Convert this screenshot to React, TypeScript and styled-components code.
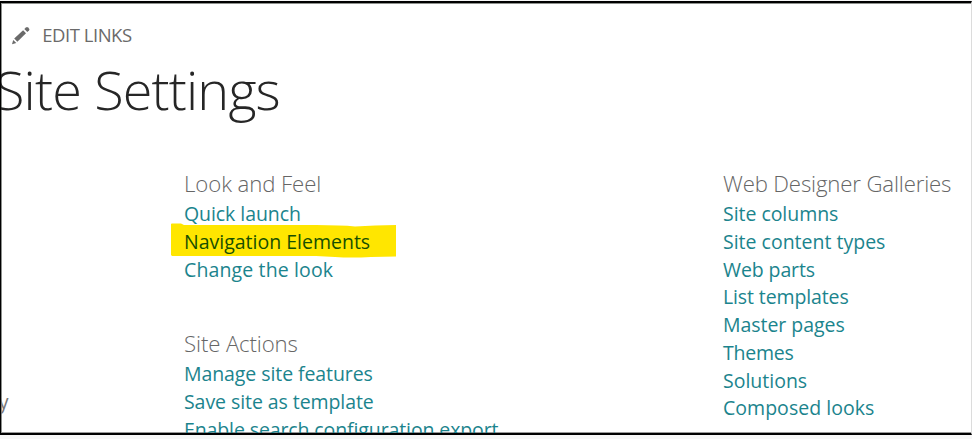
import React from 'react';
import styled, { createGlobalStyle } from 'styled-components';

const GlobalStyle = createGlobalStyle`
  *, *::before, *::after { box-sizing: border-box; }
  html, body { margin: 0; background: #f7f7f7; overflow: hidden; }
`;

const Page = styled.div`
  width: 972px;
  height: 439px;
  padding-top: 1px;
  background: #f7f7f7;
  font-family: 'Open Sans', 'Noto Sans', sans-serif;
`;

const Frame = styled.main`
  height: 434px;
  overflow: hidden;
  background: #fff;
  border-style: solid;
  border-width: 2px 1px 2px 1px;
  border-color: #000 #dcdcdc #000 #000;
  box-shadow: inset 1px 1px 0 #8d908d, inset 0 -1px 0 #999;
`;

const EditLinks = styled.div`
  display: flex;
  align-items: center;
  height: 26px;
  margin: 19px 0 0 10px;
`;

const EditLabel = styled.span`
  margin-left: 11.3px;
  font-size: 18.5px;
  line-height: 26px;
  letter-spacing: -0.48px;
  color: #6a6a6a;
  white-space: nowrap;
`;

const Title = styled.h1`
  margin: 5px 0 0 -6px;
  height: 72px;
  font-size: 54px;
  font-weight: 300;
  line-height: 72px;
  letter-spacing: -0.85px;
  color: #262626;
  white-space: nowrap;
`;

const Columns = styled.div`
  display: grid;
  grid-template-columns: 183px 539px 1fr;
  height: 306px;
  margin-top: 4px;
  padding-top: 40px;
`;

const Column = styled.div`
  display: flex;
  flex-direction: column;
  min-width: 0;
`;

const ClippedLabel = styled.span`
  margin: 218.5px 0 0 -2.3px;
  font-size: 19.5px;
  line-height: 27.8px;
  color: #777;
`;

const Section = styled.section`
  height: 160px;
`;

const Heading = styled.h2<{ $track: number }>`
  margin: 0;
  height: 31px;
  font-size: 22.2px;
  font-weight: 300;
  line-height: 30px;
  letter-spacing: ${(p) => p.$track}px;
  color: #666;
  white-space: nowrap;
`;

const List = styled.ul`
  margin: 0;
  padding: 0;
  list-style: none;
`;

const Item = styled.li`
  position: relative;
  height: 27.75px;
  line-height: 27.75px;
`;

const Link = styled.a<{ $track: number; $marked?: boolean }>`
  position: relative;
  font-size: 19.5px;
  letter-spacing: ${(p) => p.$track}px;
  color: ${(p) => (p.$marked ? '#174f00' : '#1b848d')};
  text-decoration: none;
  white-space: nowrap;
`;

const Marker = styled.svg`
  position: absolute;
  left: -13px;
  top: -5px;
  width: 226px;
  height: 36px;
`;

const PencilSvg = styled.svg`
  display: block;
  width: 20px;
  height: 20px;
`;

const Pencil = () => (
  <PencilSvg viewBox="0 0 20 20" fill="#6a6a6a">
    <path d="M1 19.2 2.2 14.9 5.3 17.9Z" />
    <path d="M3.2 13.6 12.1 5.2 15 8.2 6.4 16.8Z" />
    <path d="M13.3 4.1 15 2.4Q16 1.5 17 2.4L18 3.4Q18.9 4.4 18 5.4L16.3 7.1Z" />
  </PencilSvg>
);

interface Entry {
  text: string;
  track: number;
  marked?: boolean;
}

const lookAndFeel: Entry[] = [
  { text: 'Quick launch', track: -0.07 },
  { text: 'Navigation Elements', track: 0, marked: true },
  { text: 'Change the look', track: 0.13 },
];

const siteActions: Entry[] = [
  { text: 'Manage site features', track: -0.08 },
  { text: 'Save site as template', track: -0.07 },
  { text: 'Enable search configuration export', track: -0.11 },
];

const galleries: Entry[] = [
  { text: 'Site columns', track: -0.04 },
  { text: 'Site content types', track: 0 },
  { text: 'Web parts', track: -0.1 },
  { text: 'List templates', track: -0.12 },
  { text: 'Master pages', track: -0.04 },
  { text: 'Themes', track: -0.25 },
  { text: 'Solutions', track: 0 },
  { text: 'Composed looks', track: 0.03 },
];

const LinkSection = ({ title, track, entries }: { title: string; track: number; entries: Entry[] }) => (
  <Section>
    <Heading $track={track}>{title}</Heading>
    <List>
      {entries.map((e) => (
        <Item key={e.text}>
          {e.marked && (
            <Marker viewBox="0 0 226 36" fill="#ffe600">
              <path d="M0 1Q0 .5 1 .5H10L13 2 145 2Q170 2 184 3.5 204 2 225 2V33.5L200 34Q180 35 164 34L145 33H1L0 32Z" />
            </Marker>
          )}
          <Link $track={e.track} $marked={e.marked}>{e.text}</Link>
        </Item>
      ))}
    </List>
  </Section>
);

export default function App() {
  return (
    <Page>
      <GlobalStyle />
      <Frame>
        <EditLinks>
          <Pencil />
          <EditLabel>EDIT LINKS</EditLabel>
        </EditLinks>
        <Title>Site Settings</Title>
        <Columns>
          <Column>
            <ClippedLabel>y</ClippedLabel>
          </Column>
          <Column>
            <LinkSection title="Look and Feel" track={-0.08} entries={lookAndFeel} />
            <LinkSection title="Site Actions" track={-0.12} entries={siteActions} />
          </Column>
          <Column>
            <LinkSection title="Web Designer Galleries" track={-0.15} entries={galleries} />
          </Column>
        </Columns>
      </Frame>
    </Page>
  );
}
